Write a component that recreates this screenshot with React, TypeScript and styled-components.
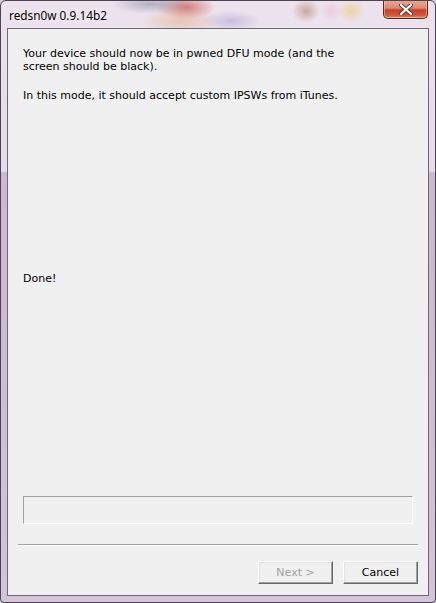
import React from "react";
import styled, { createGlobalStyle } from "styled-components";

const Global = createGlobalStyle`
  html, body { margin: 0; padding: 0; background: #d6cadb; }
  #root { width: 436px; height: 603px; }
`;

const Window = styled.div`
  box-sizing: border-box;
  width: 436px;
  height: 603px;
  display: flex;
  flex-direction: column;
  border: 1px solid #4b4352;
  border-radius: 6px 6px 4px 4px;
  overflow: hidden;
  background:
    radial-gradient(ellipse 40px 10px at 150px 3px, rgba(140, 140, 165, 0.6), transparent),
    radial-gradient(ellipse 30px 12px at 185px 6px, rgba(200, 70, 60, 0.65), transparent),
    radial-gradient(ellipse 40px 14px at 180px 20px, rgba(230, 170, 130, 0.55), transparent),
    radial-gradient(ellipse 30px 10px at 230px 20px, rgba(170, 160, 210, 0.55), transparent),
    radial-gradient(ellipse 14px 12px at 305px 10px, rgba(180, 130, 110, 0.6), transparent),
    radial-gradient(ellipse 12px 10px at 330px 10px, rgba(240, 180, 200, 0.5), transparent),
    radial-gradient(ellipse 14px 12px at 350px 10px, rgba(240, 200, 120, 0.6), transparent),
    linear-gradient(180deg, #ece3ee 0px, #e6dbe9 170px, #c9b8cf 172px, #d3c4d9 100%);
`;

const TitleBar = styled.div`
  height: 27px;
  display: flex;
  align-items: flex-start;
  justify-content: space-between;
  padding: 0 7px 0 8px;
`;

const Title = styled.span`
  font-family: "Noto Sans", "Open Sans", sans-serif;
  font-size: 11.8px;
  color: #000;
  margin-top: 6px;
  text-shadow: 0 0 6px rgba(255, 255, 255, 0.9);
`;

const CloseButton = styled.div`
  width: 45px;
  height: 19px;
  margin-top: -1px;
  box-sizing: border-box;
  border: 1px solid #5b2a24;
  border-top: none;
  border-radius: 0 0 5px 5px;
  background: linear-gradient(180deg, #e9a895 0%, #db8a73 45%, #c2412a 55%, #d0593c 85%, #e48a62 100%);
  box-shadow: inset 0 0 0 1px rgba(255, 210, 200, 0.5);
  display: flex;
  align-items: center;
  justify-content: center;
`;

const Client = styled.div`
  flex: 1;
  margin: 0 6px 6px 6px;
  border: 1px solid #6f6874;
  background: #f0f0f0;
  display: flex;
  flex-direction: column;
  font-family: Tahoma, "DejaVu Sans", sans-serif;
  font-size: 11px;
  color: #000;
`;

const Body = styled.div`
  flex: 1;
  padding: 18px 10px 0 15px;
`;

const Paragraph = styled.p<{ $gap?: number }>`
  margin: 0 0 ${(p) => p.$gap ?? 0}px 0;
  line-height: 13px;
  white-space: pre-line;
`;

const Progress = styled.div`
  height: 26px;
  margin: 0 15px 0 15px;
  border-top: 1px solid #a0a0a0;
  border-left: 1px solid #a0a0a0;
  border-bottom: 1px solid #ffffff;
  border-right: 1px solid #ffffff;
`;

const Separator = styled.div`
  margin: 20px 10px 0 10px;
  height: 1px;
  background: #a0a0a0;
  border-bottom: 1px solid #ffffff;
`;

const ButtonRow = styled.div`
  display: flex;
  justify-content: flex-end;
  gap: 10px;
  padding: 15px 10px 11px 0;
`;

const Button = styled.div<{ $disabled?: boolean }>`
  box-sizing: border-box;
  width: 75px;
  height: 23px;
  display: flex;
  align-items: center;
  justify-content: center;
  background: #f0f0f0;
  border-top: 1px solid #ffffff;
  border-left: 1px solid #ffffff;
  border-right: 1px solid #696969;
  border-bottom: 1px solid #696969;
  box-shadow: inset -1px -1px 0 #a0a0a0, inset 1px 1px 0 #e3e3e3;
  color: ${(p) => (p.$disabled ? "#a0a0a0" : "#000")};
  font-size: 11px;
`;

export default function App() {
  return (
    <>
      <Global />
      <Window>
        <TitleBar>
          <Title>redsn0w 0.9.14b2</Title>
          <CloseButton>
            <svg width="14" height="11" viewBox="0 0 14 11">
              <path d="M2 1 L12 10 M12 1 L2 10" stroke="#5a3a34" strokeWidth="4" strokeLinecap="round" />
              <path d="M2 1 L12 10 M12 1 L2 10" stroke="#ffffff" strokeWidth="2.2" strokeLinecap="round" />
            </svg>
          </CloseButton>
        </TitleBar>
        <Client>
          <Body>
            <Paragraph $gap={16}>
              {"Your device should now be in pwned DFU mode (and the\nscreen should be black)."}
            </Paragraph>
            <Paragraph $gap={170}>In this mode, it should accept custom IPSWs from iTunes.</Paragraph>
            <Paragraph>Done!</Paragraph>
          </Body>
          <Progress />
          <Separator />
          <ButtonRow>
            <Button $disabled>Next &gt;</Button>
            <Button>Cancel</Button>
          </ButtonRow>
        </Client>
      </Window>
    </>
  );
}
